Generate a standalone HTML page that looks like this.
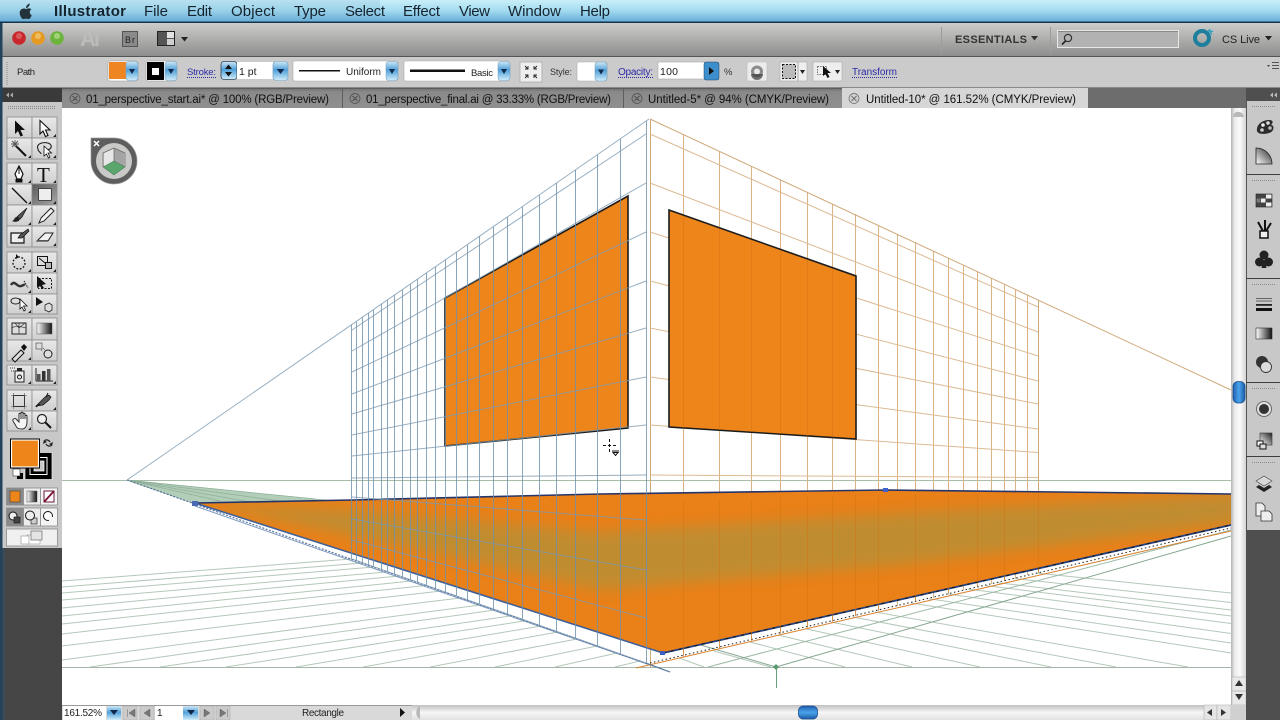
<!DOCTYPE html>
<html><head><meta charset="utf-8"><title>Illustrator</title>
<style>html,body{margin:0;padding:0;background:#fff;overflow:hidden}svg{display:block;font-family:"Liberation Sans",sans-serif;filter:blur(.35px)}</style></head>
<body>
<svg width="1280" height="720" viewBox="0 0 1280 720" xmlns="http://www.w3.org/2000/svg">
<defs>
<linearGradient id="mb" x1="0" y1="0" x2="0" y2="1"><stop offset="0" stop-color="#c9eef8"/><stop offset=".45" stop-color="#a5dcf0"/><stop offset="1" stop-color="#5fa8d6"/></linearGradient>
<linearGradient id="tb" x1="0" y1="0" x2="0" y2="1"><stop offset="0" stop-color="#cdcdcb"/><stop offset="1" stop-color="#8b8b8b"/></linearGradient>
<linearGradient id="tab" x1="0" y1="0" x2="0" y2="1"><stop offset="0" stop-color="#6f6f6f"/><stop offset=".2" stop-color="#8a8a8a"/><stop offset="1" stop-color="#8f8f8f"/></linearGradient>
<linearGradient id="bb" x1="0" y1="0" x2="0" y2="1"><stop offset="0" stop-color="#cfe8f7"/><stop offset=".45" stop-color="#4f9fd8"/><stop offset="1" stop-color="#d2eefb"/></linearGradient>
<linearGradient id="thumb" x1="0" y1="0" x2="1" y2="0"><stop offset="0" stop-color="#1f5fb0"/><stop offset=".5" stop-color="#4aa3ea"/><stop offset="1" stop-color="#1a5aa8"/></linearGradient>
<linearGradient id="thumbh" x1="0" y1="0" x2="0" y2="1"><stop offset="0" stop-color="#1f5fb0"/><stop offset=".5" stop-color="#4aa3ea"/><stop offset="1" stop-color="#1a5aa8"/></linearGradient>
<linearGradient id="sv" x1="0" y1="0" x2="1" y2="0"><stop offset="0" stop-color="#b4b4b4"/><stop offset=".25" stop-color="#ececec"/><stop offset=".6" stop-color="#fafafa"/><stop offset="1" stop-color="#d4d4d4"/></linearGradient>
<linearGradient id="sh" x1="0" y1="0" x2="0" y2="1"><stop offset="0" stop-color="#c0c0c0"/><stop offset=".5" stop-color="#f6f6f6"/><stop offset="1" stop-color="#e0e0e0"/></linearGradient>
<linearGradient id="cell" x1="0" y1="0" x2="0" y2="1"><stop offset="0" stop-color="#e9e9e9"/><stop offset="1" stop-color="#cfcfcf"/></linearGradient>
<linearGradient id="sel" x1="0" y1="0" x2="1" y2="1"><stop offset="0" stop-color="#595959"/><stop offset="1" stop-color="#a8a8a8"/></linearGradient>
<linearGradient id="k2w" x1="0" y1="0" x2="1" y2="0"><stop offset="0" stop-color="#fff"/><stop offset="1" stop-color="#111"/></linearGradient>
<linearGradient id="k2wd" x1="0" y1="1" x2="1" y2="0"><stop offset="0" stop-color="#fff"/><stop offset="1" stop-color="#222"/></linearGradient>
<filter id="b8" x="-10%" y="-30%" width="120%" height="160%"><feGaussianBlur stdDeviation="7"/></filter>
<clipPath id="fc"><path d="M195 503L352 500L600 494L886 490L1231 494V525L663 653Z"/></clipPath>
<g id="dd"><rect x="0" y="0" width="12" height="19" rx="3" fill="url(#bb)" stroke="#7ea6c4" stroke-width=".6"/><path d="M3 7.5h6l-3 5z" fill="#12284a"/></g>
</defs>

<!-- menu bar -->
<rect width="1280" height="23" fill="url(#mb)"/>
<rect x="0" width="380" height="23" fill="#6fa8cc" opacity=".18"/>
<rect x="0" y="21.5" width="1280" height="1.6" fill="#16354c"/>
<path d="M31.5 9.3c-2-1.5-4-.9-5.2-.2-1-.6-3.200-1.200-5.100.3-2.500 2-1.500 6 .3 8.500 1 1.300 2 1.500 3 1 1-.4 2-.4 3 0 1.200.5 2.200 0 3-1.300.5-.8 1-1.600 1.200-2.400-2.400-1-2.600-4.600-.2-5.900zM26 8.200c0-2.200 1.500-4.200 3.700-4.700.1 2.300-1.500 4.300-3.700 4.700z" fill="#24323a"/>
<g font-size="15" fill="#15242e">
<text x="54" y="16" font-weight="bold" textLength="72">Illustrator</text>
<text x="144" y="16" textLength="24">File</text>
<text x="187" y="16" textLength="25">Edit</text>
<text x="231" y="16" textLength="44">Object</text>
<text x="294" y="16" textLength="32">Type</text>
<text x="345" y="16" textLength="40">Select</text>
<text x="403" y="16" textLength="37">Effect</text>
<text x="459" y="16" textLength="31">View</text>
<text x="508" y="16" textLength="53">Window</text>
<text x="580" y="16" textLength="30">Help</text>
</g>

<!-- title bar -->
<rect x="0" y="23" width="1280" height="34" fill="url(#tb)"/>
<rect x="0" y="56" width="1280" height="1" fill="#555"/>
<circle cx="19" cy="38" r="6.800" fill="#c8282c"/><circle cx="19" cy="36" r="3" fill="#e98a88" opacity=".5"/>
<circle cx="38" cy="38" r="6.800" fill="#e59a22"/><circle cx="38" cy="36" r="3" fill="#f6d38a" opacity=".6"/>
<circle cx="57" cy="38" r="6.800" fill="#6cb43c"/><circle cx="57" cy="36" r="3" fill="#c4e6a0" opacity=".6"/>
<text x="80" y="46" font-size="22" font-weight="bold" fill="#bcbcba" textLength="20">Ai</text>
<rect x="122.500" y="31.500" width="15" height="15" fill="#8a8a8a" stroke="#555"/>
<text x="125" y="43" font-size="9" fill="#222" textLength="10">Br</text>
<rect x="157.500" y="31.500" width="17" height="14" fill="#555" stroke="#222"/>
<rect x="167" y="32" width="7" height="6" fill="#e4e4e4"/><rect x="167" y="39" width="7" height="6" fill="#cfcfcf"/>
<path d="M181 37h7l-3.500 4.500z" fill="#222"/>
<rect x="941" y="27" width="1" height="28" fill="#9c9c9c"/><rect x="1050" y="27" width="1" height="28" fill="#9c9c9c"/>
<text x="955" y="43" font-size="11" font-weight="bold" fill="#333" textLength="72">ESSENTIALS</text>
<path d="M1031 36h7l-3.500 4.500z" fill="#333"/>
<rect x="1057.500" y="30.500" width="121" height="17" fill="#b2b2b2" stroke="#e8e8e8"/>
<rect x="1058" y="31" width="120" height="1" fill="#888"/>
<circle cx="1068" cy="38" r="3.600" fill="none" stroke="#333" stroke-width="1.200"/><path d="M1065.500 41l-3.500 3.500" stroke="#222" stroke-width="1.600"/>
<circle cx="1202" cy="38" r="7" fill="none" stroke="#1d7f9c" stroke-width="4"/>
<path d="M1210 32l0-3M1210 32l3-1M1210 32l2 2.500M1210 32l-2-2" stroke="#2aa0c0" stroke-width="1.200"/>
<text x="1222" y="43" font-size="11" fill="#222" textLength="38">CS Live</text>
<path d="M1265 36h7l-3.500 4.500z" fill="#222"/>

<!-- control bar -->
<rect x="0" y="57" width="1280" height="31" fill="#cbcbcb"/>
<path d="M7 62v24" stroke="#888" stroke-width="1" stroke-dasharray="1 1"/>
<text x="17" y="75" font-size="9.500" fill="#222" textLength="18">Path</text>
<rect x="108" y="61" width="30" height="20" rx="2" fill="#fff" stroke="#999" stroke-width=".6"/><rect x="109" y="62" width="17" height="17" fill="#ee8520"/>
<use href="#dd" x="126" y="61.500"/>
<rect x="146" y="61" width="30" height="20" rx="2" fill="#fff" stroke="#999" stroke-width=".6"/><rect x="147" y="62" width="17" height="18" fill="#000"/><rect x="152" y="68" width="7" height="7" fill="#fff"/>
<use href="#dd" x="165" y="61.500"/>
<text x="187" y="75" font-size="9.500" fill="#2c2ca8" textLength="29">Stroke:</text>
<path d="M187 77.500h29" stroke="#2c2ca8" stroke-dasharray="1 1"/>
<rect x="221" y="61.500" width="16" height="18" rx="3" fill="url(#bb)" stroke="#345" stroke-width=".8"/>
<path d="M225 69h7l-3.500-4.500zM225 72h7l-3.500 4.500z" fill="#111"/>
<rect x="237" y="62" width="36" height="17" fill="#fff"/><text x="239" y="75" font-size="10.500" fill="#222">1 pt</text>
<use href="#dd" transform="translate(273 61.500) scale(1.250 1)"/>
<rect x="293" y="61" width="105" height="20" rx="2" fill="#fff" stroke="#aaa" stroke-width=".6"/>
<rect x="299" y="70" width="41" height="1.500" fill="#111"/>
<text x="346" y="75" font-size="10" fill="#222" textLength="35">Uniform</text>
<use href="#dd" x="386" y="61.500"/>
<rect x="404" y="61" width="105" height="20" rx="2" fill="#fff" stroke="#aaa" stroke-width=".6"/>
<rect x="410" y="69.500" width="55" height="2.500" fill="#111"/>
<text x="471" y="76" font-size="9.500" fill="#222" textLength="22">Basic</text>
<use href="#dd" x="498" y="61.500"/>
<rect x="520" y="62" width="22" height="20" fill="#eee" stroke="#aaa" stroke-width=".8"/>
<path d="M525 66l3 3m-3 0h3v-3M537 66l-3 3m3 0h-3v-3M525 78l3-3m-3 0h3v3M537 78l-3-3m3 0h-3v3" stroke="#222" fill="none" stroke-width=".9"/>
<text x="550" y="75" font-size="9" fill="#333" textLength="22">Style:</text>
<rect x="577" y="62" width="30" height="19" rx="2" fill="#fff" stroke="#aaa" stroke-width=".6"/><use href="#dd" x="595" y="62"/>
<text x="618" y="75" font-size="10" fill="#2c2ca8" textLength="35">Opacity:</text>
<path d="M618 77.500h35" stroke="#2c2ca8" stroke-dasharray="1 1"/>
<rect x="658" y="62" width="47" height="17" fill="#fff" stroke="#aaa" stroke-width=".6"/>
<text x="660" y="75" font-size="10.500" fill="#222" textLength="18">100</text>
<rect x="704" y="62" width="15" height="18" rx="2" fill="#3c8fcc" stroke="#246" stroke-width=".5"/><path d="M709 67v8l5-4z" fill="#111"/>
<text x="724" y="75" font-size="9.500" fill="#333">%</text>
<rect x="747" y="62" width="20" height="19" rx="2" fill="#ececec" stroke="#bbb" stroke-width=".6"/>
<circle cx="757" cy="71.500" r="6" fill="#8a8a8a"/><circle cx="757" cy="71.500" r="3" fill="#e8e8e8"/><path d="M751 74a6 6 0 0 0 12 0z" fill="#3c3c3c" opacity=".7"/>
<rect x="780" y="62" width="27" height="19" fill="#eee" stroke="#aaa" stroke-width=".6"/><rect x="782.500" y="64.500" width="13" height="14" fill="#bbb" stroke="#111" stroke-dasharray="2 1.500"/><path d="M800 70h5l-2.500 4z" fill="#222"/><rect x="797.500" y="62" width="1" height="19" fill="#aaa"/>
<rect x="813" y="62" width="29" height="19" fill="#eee" stroke="#aaa" stroke-width=".6"/><rect x="817.500" y="66.500" width="9" height="8" fill="none" stroke="#777" stroke-dasharray="1.500 1"/><path d="M823 66l0 10 2.500-2 2 4 2-1-2-4h3.500z" fill="#111"/><path d="M835 70h5l-2.500 4z" fill="#222"/>
<text x="852" y="75" font-size="10" fill="#2c2ca8" textLength="45">Transform</text>
<path d="M852 77.500h45" stroke="#2c2ca8" stroke-dasharray="1 1"/>
<path d="M1272 62.500h7M1272 65.500h7M1272 68.500h7" stroke="#555"/><path d="M1267 65h3l-1.500 2z" fill="#444"/>

<!-- tabs -->
<rect x="62" y="88" width="1185" height="20" fill="url(#tab)"/>
<rect x="0" y="87.500" width="1280" height="1" fill="#444"/>
<rect x="1088" y="88" width="159" height="20" fill="#6d6d6d"/>
<rect x="842" y="88" width="246" height="20" fill="#d6d6d6"/>
<rect x="342" y="89" width="1" height="19" fill="#5e5e5e"/><rect x="623" y="89" width="1" height="19" fill="#5e5e5e"/>
<g fill="#8a8a8a" stroke="#4a4a4a" stroke-width=".7"><circle cx="75" cy="98.500" r="5"/><circle cx="355" cy="98.500" r="5"/><circle cx="637" cy="98.500" r="5"/></g>
<circle cx="854" cy="98.500" r="5" fill="#cfcfcf" stroke="#666" stroke-width=".7"/>
<path d="M72.500 96l5 5m0-5l-5 5M352.500 96l5 5m0-5l-5 5M634.500 96l5 5m0-5l-5 5" stroke="#3c3c3c" stroke-width=".8"/><path d="M851.500 96l5 5m0-5l-5 5" stroke="#555" stroke-width=".8"/>
<g font-size="11.500" fill="#111">
<text x="86" y="103" textLength="243">01_perspective_start.ai* @ 100% (RGB/Preview)</text>
<text x="366" y="103" textLength="245">01_perspective_final.ai @ 33.33% (RGB/Preview)</text>
<text x="648" y="103" textLength="181">Untitled-5* @ 94% (CMYK/Preview)</text>
<text x="866" y="103" textLength="210">Untitled-10* @ 161.52% (CMYK/Preview)</text>
</g>

<!-- canvas -->
<rect x="62" y="108" width="1169" height="597" fill="#fff"/>
<g fill="none" stroke-width="1">
<path stroke="#b4c8ba" d="M62 581L351 559M62 587L363 563M62 593L374 567M62 600L386 572M62 608L399 576M62 616L412 581M62 624L425 585.500M62 634L441 591M62 646L460 598M62 660L480 605M90 667L495 610M160 667L510 616M226 667L524 621M296 667L541 626M363 667L558 632M430 667L577 639M495 667L597 646M555 667L617 653M615 667L640 661"/>
<path stroke="#b4c8ba" d="M1036 573L1231 593M1014 578.500L1231 602.500M997 582.600L1231 610M985 585.500L1231 616M968 589L1231 623.500M948 594L1231 633.500M929 598.700L1231 643M911 603L1231 653M875 612L1188 667M853 617L1116 667M831 622L1051 667M805 628.600L980 667M778 635L912 667M750 642L845 667M714 651L771 667M679 658L704 667"/>
<path stroke="#9cbaa6" d="M708 667L1231 530"/>
<path stroke="#86a690" d="M776 667L1231 536M776 667L680 639"/>
<path stroke="#a4bca8" d="M62 480.500H1231"/>
<path stroke="#a4b4a8" d="M62 667.500H1231"/>
<path stroke="#6aa07c" d="M776.500 667V688"/>
<path stroke="#dcb484" d="M683.500 134V658M719.500 151V649M751.500 166V641M780.500 180V634M807.500 192V628M832.500 204V622M855.500 214V616M878.500 225V611M897.500 234V606M915.500 242V602M933.500 251V598M948.500 258V594M963.500 265V590M977.500 271V587M991.500 278V584M1004.500 284V581M1015.500 289V578M1027.500 295V575"/>
<path stroke="#cfa878" d="M650.500 119V668M1038.500 300V573M650 119L1231 390"/>
<path stroke="#dcba94" d="M650 134L1038 307M650 183L1038 332M650 232L1038 356M650 281L1038 381M650 328L1038 404M650 377L1038 429M650 425L1038 452.500M650 475L1038 477.500"/>
</g>
<!-- wedge -->
<path d="M127 480L330 500L195 503Z" fill="#b2cdb8"/>
<path d="M127 480L196 504M127 480L220 501M127 480L250 502M127 480L280 501M127 480L315 499" stroke="#8fb09a" stroke-width=".7" fill="none"/>
<!-- floor -->
<path d="M195 503L352 500L600 494L886 490L1231 494V525L663 653Z" fill="#ea8018"/>
<g clip-path="url(#fc)"><path d="M1240 493V522L900 565L600 590L350 535L200 504L350 510L600 532L900 513Z" fill="#8f9c50" opacity=".45" filter="url(#b8)"/></g>
<path d="M195 503L352 500L600 494L886 490L1231 494" fill="none" stroke="#25356a" stroke-width="1.600"/>
<path d="M195 503L663 653" stroke="#3f5f98" stroke-width="1.600" fill="none"/>
<path d="M663 653L1231 525" stroke="#24407e" stroke-width="1.800" fill="none"/>
<path d="M663 653L1231 525" stroke="#111" stroke-width="1" stroke-dasharray="3 5" fill="none"/>
<path d="M195 506L670 672" stroke="#7a96bc" stroke-width="1" fill="none"/>
<path d="M127 480L648 664" stroke="#4c6c9c" stroke-width="1.100" stroke-dasharray="2 1.500" fill="none"/>
<path d="M636 668L1231 531" stroke="#d8832e" stroke-width="1" fill="none"/>
<path d="M650 663L1231 528" stroke="#222" stroke-width="1" stroke-dasharray="1.500 2.500" fill="none"/>
<rect x="883" y="488" width="5" height="4" fill="#4060d0"/><rect x="192" y="501" width="6" height="5" fill="#4a6ab4"/><rect x="660" y="651" width="5" height="4" fill="#4060c0"/>
<path d="M776 664l3 3-3 3-3-3z" fill="#5a9a70"/>
<!-- rectangles -->
<path d="M445 298L628 196V428L445 446Z" fill="#ee851a" stroke="#1c1c1c" stroke-width="1.600"/>
<path d="M669 210L856 276V439L669 427Z" fill="#ee851a" stroke="#1c1c1c" stroke-width="1.600"/>
<path d="M683.500 216V428M719.500 229V430M751.500 240V432M780.500 250V434M807.500 260V436M832.500 269V437M683.500 500V655M719.500 500V648M751.500 500V640M780.500 498V633M807.500 497V627M832.500 496V621M855.500 495V616M878.500 494V610M915.500 494V601M948.500 494V593M977.500 494V586M1004.500 494V580M1038.500 494V572" stroke="#cf7414" opacity=".5" fill="none"/>
<!-- blue grid -->
<g fill="none" stroke-width="1">
<path stroke="#6d90ad" opacity=".8" d="M351.500 325V559M356.500 322V561M362.500 317V563M368.500 313V565M373.500 310V567M381.500 304V570M387.500 300V572M394.500 295V574M402.500 290V577M410.500 284V580M417.500 279V583M426.500 273V586M435.500 267V589M445.500 260V592M456.500 252V596M467.500 245V600M479.500 236V604M493.500 227V609M507.500 217V614M522.500 207V620M539.500 195V626M556.500 183V632M575.500 170V638M597.500 155V646M620.500 139V654M646.500 121V663"/>
<path stroke="#7d9ab0" opacity=".8" d="M127 480L649 119M352 330L646 134M352 351L646 183M352 372L646 232M352 394L646 281M352 414L646 328M352 435L646 377M352 456L646 425M352 478L646 475M352 497L646 520M352 519L646 570M352 540L646 618M352 559L646 663"/>
<path stroke="#5a7a9c" d="M646 663L670 672"/>
</g>
<!-- widget -->
<path d="M91 138h23a23 23 0 1 1-23 23z" fill="#5e5e5e" stroke="#9a9a9a" stroke-width=".7"/>
<circle cx="114" cy="161" r="18" fill="#c9c9c7"/>
<path d="M114 148l-10 5v14l10 7z" fill="#e6e6e6"/><path d="M114 148l10 5v14l-10-0z" fill="#a4a4a4"/>
<path d="M103 167l11-6 11 6-11 8z" fill="#5aa66c" stroke="#3d6a4c" stroke-width=".5"/>
<path d="M114 148l-11 5v14M114 148l11 5v14M114 149v12" fill="none" stroke="#666" stroke-width=".7"/>
<path d="M94 141l5 5m0-5l-5 5" stroke="#fff" stroke-width="1.500"/>
<!-- cursor -->
<path d="M609.500 439v3M609.500 444v3M609.500 449v3M603 445.500h3M608 445.500h3M613 445.500h3M612 451h7M613 452.500h5l-2.500 3z" stroke="#111" fill="none"/>

<!-- left toolbar -->
<rect x="0" y="88" width="62" height="632" fill="#464646"/>
<rect x="2" y="102" width="60" height="446" fill="#c8c8c8"/>
<rect x="2" y="88" width="60" height="14" fill="#3a3a3a"/>
<rect x="0" y="23" width="2.500" height="697" fill="#24425c"/>
<rect x="2.500" y="548" width="3" height="172" fill="#3c4a54"/>
<path d="M6 92.500l3 2.500-3 2.500zM10 92.500l3 2.500-3 2.500z" fill="#aaa" transform="matrix(-1 0 0 1 19 0)"/>
<path d="M8 106.500h48M8 108.500h48" stroke="#8a8a8a" stroke-dasharray="1 1"/>
<g fill="url(#cell)" stroke="#8a8a8a" stroke-width=".8">
<rect x="7" y="117" width="25" height="21"/><rect x="32" y="117" width="25" height="21"/><rect x="7" y="138" width="25" height="21"/><rect x="32" y="138" width="25" height="21"/>
<rect x="7" y="163" width="25" height="21"/><rect x="32" y="163" width="25" height="21"/><rect x="7" y="184" width="25" height="21"/><rect x="32" y="184" width="25" height="21" fill="url(#sel)"/><rect x="7" y="205" width="25" height="21"/><rect x="32" y="205" width="25" height="21"/><rect x="7" y="226" width="25" height="21"/><rect x="32" y="226" width="25" height="21"/>
<rect x="7" y="252" width="25" height="21"/><rect x="32" y="252" width="25" height="21"/><rect x="7" y="273" width="25" height="21"/><rect x="32" y="273" width="25" height="21"/><rect x="7" y="294" width="25" height="20"/><rect x="32" y="294" width="25" height="20"/>
<rect x="7" y="318" width="25" height="22"/><rect x="32" y="318" width="25" height="22"/><rect x="7" y="340" width="25" height="21"/><rect x="32" y="340" width="25" height="21"/>
<rect x="7" y="365" width="25" height="20"/><rect x="32" y="365" width="25" height="20"/>
<rect x="7" y="390" width="25" height="21"/><rect x="32" y="390" width="25" height="21"/><rect x="7" y="411" width="25" height="20"/><rect x="32" y="411" width="25" height="20"/>
</g>
<g fill="#222">
<path d="M56 137v-3l-3 3zM31 158v-3l-3 3zM56 158v-3l-3 3zM31 183v-3l-3 3zM56 183v-3l-3 3zM31 204v-3l-3 3zM56 204v-3l-3 3zM31 225v-3l-3 3zM56 225v-3l-3 3zM56 246v-3l-3 3zM31 272v-3l-3 3zM56 272v-3l-3 3zM31 293v-3l-3 3zM31 313v-3l-3 3zM31 360v-3l-3 3zM31 384v-3l-3 3zM56 384v-3l-3 3zM56 410v-3l-3 3zM31 430v-3l-3 3z"/>
</g>
<path d="M15 120.500V134l3-3 2.500 5.500 2.500-1-2.500-5.500h4.500z" fill="#111"/>
<path d="M40 120.500V134l3-3 2.500 5.500 2.500-1-2.500-5.500h4.500z" fill="#fff" stroke="#111" stroke-width="1.100"/>
<path d="M16 146l10 10" stroke="#111" stroke-width="2"/><path d="M15 140v7M11 144h8M12 141l6 6M18 141l-6 6" stroke="#555" stroke-width=".9"/>
<path d="M38 149c-3-6 8-8 12-5 3 3 0 6-4 6M38 149c0 3 3 3 3 5" fill="none" stroke="#222" stroke-width="1.100"/><path d="M44 146v10l2.500-2 2 4 1.500-1-2-4h3.500z" fill="#fff" stroke="#111" stroke-width=".8"/>
<path d="M19 166l-4 8 2 5h4l2-5z" fill="#fff" stroke="#111" stroke-width="1.200"/><path d="M19 166v8" stroke="#111"/><rect x="15.500" y="179" width="7" height="3.500" fill="#111"/>
<text x="37" y="182" font-family="Liberation Serif,serif" font-size="21" fill="#111">T</text>
<path d="M12 188l15 15" stroke="#111" stroke-width="1.300"/>
<rect x="38.500" y="188.500" width="13" height="12" rx="1" fill="#eee" stroke="#222" stroke-width=".8"/>
<path d="M27 208l-8 7-2 2 3 2 2-2z" fill="#555" stroke="#111" stroke-width=".7"/><path d="M17 217c-3 0-2 3-5 4 3 1.500 7 1 8-2z" fill="#222"/>
<path d="M51 208l-10 10-2 5 5-2 10-10z" fill="#f4f4f4" stroke="#222" stroke-width="1"/>
<path d="M11 233h13v10H11z" fill="#eee" stroke="#111" stroke-width="1.200"/><path d="M28 229l-8 6-2 3 4 0 7-7z" fill="#555" stroke="#111" stroke-width=".7"/>
<path d="M37 241l8-8h8l-5 8z" fill="#f2f2f2" stroke="#222"/><path d="M37 241h11v-1H37z" fill="#555"/>
<circle cx="19" cy="263" r="6" fill="none" stroke="#111" stroke-width="1.300" stroke-dasharray="1.800 1.600"/><path d="M16 254l3 3-3 2zM14 257h3" fill="#111"/>
<rect x="37.500" y="256.500" width="10" height="9" fill="#ddd" stroke="#111"/><rect x="45.500" y="262.500" width="6" height="6" fill="#bbb" stroke="#111"/><path d="M39 258l6 5" stroke="#111"/>
<path d="M11 285c3-5 5 0 8 1 3 1 4-2 6-1" fill="none" stroke="#333" stroke-width="2.500"/><path d="M24 281l4 7" stroke="#111" stroke-dasharray="1.500 1"/>
<rect x="38.500" y="278.500" width="13" height="10" fill="none" stroke="#111" stroke-dasharray="2 1.500"/><path d="M37 276v12l3-2 2 3 2-1-2-3 4-1z" fill="#111"/>
<path d="M11 301c0-4 9-4 9 0s-9 4-9 0z" fill="#ddd" stroke="#222"/><path d="M20 299v10l2-2 2 4 1.500-1-2-4h3.500z" fill="#fff" stroke="#111" stroke-width=".8"/>
<path d="M36 297v9l7-4z" fill="#111"/><path d="M45 305l4-2 3 2v5l-3 2-4-2z" fill="#ddd" stroke="#222" stroke-width=".8"/>
<rect x="12" y="323" width="14" height="11" fill="#ddd" stroke="#222"/><path d="M12 328c4-3 10-1 14 0M19 323v11M15 323l4 5 6-5" fill="none" stroke="#333" stroke-width=".7"/>
<rect x="37" y="323" width="15" height="11" fill="url(#k2w)" stroke="#555" stroke-width=".5"/>
<path d="M12 359l9-9 3 3-9 9z" fill="#ddd" stroke="#111"/><path d="M21 347l3-3 3 3-3 4z" fill="#111"/>
<rect x="36" y="343" width="6" height="6" fill="#ddd" stroke="#555" stroke-width=".7"/><circle cx="48" cy="354" r="4" fill="#ddd" stroke="#222"/><path d="M41 350l2 1M43 348l3 3" stroke="#555" stroke-dasharray="1 1"/>
<rect x="15" y="371" width="9" height="11" fill="#eee" stroke="#222"/><circle cx="19.500" cy="377" r="2" fill="none" stroke="#111"/><rect x="17" y="368" width="5" height="3" fill="#222"/><path d="M10 368h5M11 371h4" stroke="#444" stroke-dasharray="1 1"/>
<path d="M36 381h17M36 368v13" stroke="#222" fill="none"/><rect x="37" y="374" width="3.500" height="7" fill="#555"/><rect x="42" y="371" width="3.500" height="10" fill="#333"/><rect x="47" y="369" width="3.500" height="12" fill="#555"/>
<rect x="13.500" y="395.500" width="11" height="11" fill="none" stroke="#111"/><path d="M11 395.500h16M11 406.500h16M13.500 393v16M24.500 393v16" stroke="#555" stroke-width=".6"/>
<path d="M36 406l9-9 4-2 2 2-2 3-6 5z" fill="#555" stroke="#111" stroke-width=".7"/><path d="M48 393l-2 4M40 404l-4 3" stroke="#111"/>
<path d="M13 421l3 5c1 3 4 3 7 3 3-1 4-4 4-7v-6c0-1-2-1-2 0v3-5c0-1-2-1-2 0v5-6c0-1-2-1-2 0v6-5c0-1-2-1-2 0v8l-3-3c-1-1-4 0-3 2z" fill="#f4f4f4" stroke="#222" stroke-width=".9"/>
<circle cx="42" cy="419" r="4.500" fill="#eee" stroke="#222" stroke-width="1.200"/><path d="M45.500 422.500l5.500 5.500" stroke="#111" stroke-width="2"/>
<rect x="25" y="452.500" width="27" height="27" fill="#000" stroke="#eee" stroke-width=".7"/>
<rect x="30" y="457.500" width="17" height="17" fill="none" stroke="#fff"/><rect x="34" y="461" width="10" height="10" fill="#c8c8c8" stroke="#fff" stroke-width=".7"/>
<rect x="11.500" y="440" width="27" height="27" fill="#ee851a" stroke="#fff" stroke-width="1.200"/>
<rect x="10.500" y="439" width="29" height="29" fill="none" stroke="#000"/>
<path d="M44 441c2-2 5-1 6 1M52 445c-2 2-5 1-6-1" fill="none" stroke="#222" stroke-width="1.200"/><path d="M43 444l1-4 3 2zM53 442l-1 4-3-2z" fill="#222"/>
<rect x="17" y="473" width="6" height="6" fill="#000"/><rect x="13" y="469" width="7" height="7" fill="#fff" stroke="#333" stroke-width=".6"/>
<g stroke="#8a8a8a" stroke-width=".8" fill="#ececec">
<rect x="6.500" y="488" width="17" height="17" fill="#8a8a8a"/><rect x="23.500" y="488" width="17" height="17"/><rect x="40.500" y="488" width="17" height="17" fill="#f4f4f4"/>
<rect x="6.500" y="508" width="17" height="18" fill="#8a8a8a"/><rect x="23.500" y="508" width="17" height="18"/><rect x="40.500" y="508" width="17" height="18" fill="#f4f4f4"/>
<rect x="6.500" y="529" width="51" height="17" fill="#f0f0f0"/>
</g>
<rect x="10" y="491" width="10" height="11" fill="#ee851a" stroke="#333" stroke-width=".5"/>
<rect x="27" y="491" width="10" height="11" fill="url(#k2w)" stroke="#555" stroke-width=".5"/>
<rect x="44" y="491" width="10" height="11" fill="#fff" stroke="#6a1a3c"/><path d="M44 502l10-11" stroke="#7a1436" stroke-width="1.800"/>
<circle cx="13" cy="516" r="4" fill="#eee" stroke="#111"/><rect x="14" y="517" width="6" height="6" fill="#444" stroke="#111" stroke-width=".6"/>
<rect x="31" y="518" width="6" height="6" fill="#ccc" stroke="#111" stroke-width=".6"/><circle cx="30" cy="515.500" r="4.500" fill="#eee" stroke="#111"/>
<circle cx="48" cy="516" r="4.500" fill="#fff" stroke="#111"/><path d="M49 517h5v5h-5z" fill="#f4f4f4"/>
<rect x="27" y="535" width="13" height="9" fill="#fff" stroke="#999" stroke-width=".6"/><rect x="31" y="531" width="11" height="9" fill="#e4e4e4" stroke="#555" stroke-width=".6"/>
<rect x="21" y="536" width="8" height="8" fill="#fff" stroke="#777" stroke-width=".5"/>

<!-- right scrollbar -->
<rect x="1231" y="108" width="15" height="597" fill="url(#sv)"/>
<path d="M1233 117c0-7 10-7 11 0z" fill="#b8b8b8"/>
<rect x="1233" y="381.500" width="12" height="21.500" rx="5" fill="url(#thumb)" stroke="#174d8c" stroke-width=".8"/>
<rect x="1232" y="677" width="14" height="28" fill="#e8e8e8" stroke="#aaa" stroke-width=".5"/>
<path d="M1232 691h14" stroke="#bbb"/>
<path d="M1235 686h8l-4-6zM1235 694h8l-4 6z" fill="#333"/>

<!-- right dock -->
<rect x="1246" y="88" width="34" height="632" fill="#4f4f4f"/>
<rect x="1246" y="101" width="34" height="429" fill="#c8c8c8"/>
<rect x="1246" y="100" width="1" height="430" fill="#555"/>
<path d="M1246 174.500h34M1246 278.500h34M1246 382.500h34M1246 456.500h34" stroke="#3f3f3f"/>
<path d="M1252 106.500h24M1252 180.500h24M1252 284.500h24M1252 388.500h24M1252 462.500h24" stroke="#8a8a8a" stroke-dasharray="1 1"/>
<path d="M1277 92.500l-3 2.500 3 2.500zM1273 92.500l-3 2.500 3 2.500z" fill="#bbb"/>
<path d="M1257 131c-1-6 5-11 12-11 5 0 4 3 2 5 4 0 3 7-2 8-3 1-11 2-12-2z" fill="#2c2c2c"/><circle cx="1263" cy="125" r="1.800" fill="#eee"/><circle cx="1268" cy="123" r="1.800" fill="#ddd"/><circle cx="1270" cy="128" r="1.800" fill="#bbb"/><circle cx="1262" cy="130" r="1.800" fill="#ccc"/>
<path d="M1256 148v16h16c0-9-7-16-16-16z" fill="url(#k2wd)" stroke="#222" stroke-width=".8"/>
<rect x="1256" y="194" width="16" height="13" fill="#444" stroke="#222" stroke-width=".6"/>
<path d="M1266 194.500h5.500v4h-5.500zM1261 198.500h4.500v4h-4.500zM1266 202.500h5.500v4h-5.500z" fill="#eee"/><path d="M1256.500 198.500h4v4h-4z" fill="#777"/>
<rect x="1260" y="231" width="8" height="7" fill="#eee" stroke="#111" stroke-width="1.500"/><path d="M1263 231l-5-9M1265 231l0-11M1266 231l5-8" stroke="#111" stroke-width="2"/>
<circle cx="1264" cy="255" r="4.500" fill="#222"/><circle cx="1259.500" cy="262" r="4.500" fill="#222"/><circle cx="1268.500" cy="262" r="4.500" fill="#222"/><path d="M1263 260h2l1.500 8h-5z" fill="#222"/>
<path d="M1256 298.500h16M1256 301h16" stroke="#444" stroke-width=".8"/><rect x="1256" y="304" width="16" height="1.800" fill="#222"/><rect x="1256" y="308" width="16" height="3" fill="#111"/>
<rect x="1256" y="328" width="16" height="11" fill="url(#k2w)" stroke="#333" stroke-width=".6"/>
<circle cx="1262" cy="362" r="6" fill="#333"/><circle cx="1266" cy="367" r="5.500" fill="#ddd" stroke="#333" stroke-width=".9"/>
<circle cx="1264" cy="409" r="7.500" fill="#ddd" stroke="#555" stroke-width=".8"/><circle cx="1264" cy="409" r="5" fill="#333"/>
<rect x="1260" y="433" width="12" height="12" fill="url(#k2wd)" stroke="#333" stroke-width=".6"/><rect x="1257" y="441" width="6" height="5" fill="#fff" stroke="#111"/><rect x="1260" y="444" width="6" height="5" fill="#ddd" stroke="#111"/>
<path d="M1256 481l8-5 8 5-8 5z" fill="#d8d8d8" stroke="#444" stroke-width=".6"/><path d="M1256 487l3-2 5 3 5-3 3 2-8 5z" fill="#222"/>
<path d="M1256 503h6l3 3v10h-9z" fill="#eee" stroke="#333" stroke-width=".8"/><path d="M1261 511h8l3 3v7h-11z" fill="#eee" stroke="#333" stroke-width=".8"/>

<!-- bottom status -->
<rect x="62" y="705" width="1184" height="15" fill="#d9d9d9"/>
<rect x="62" y="705" width="1184" height="1" fill="#999"/>
<rect x="63" y="706" width="43" height="14" fill="#fff"/>
<text x="64" y="716" font-size="10" fill="#222" textLength="38">161.52%</text>
<rect x="107" y="706" width="14" height="14" fill="url(#bb)"/><path d="M110 710h8l-4 5z" fill="#12284a"/>
<g fill="#cbcbcb" stroke="#aaa" stroke-width=".5"><rect x="123" y="706" width="14" height="14"/><rect x="140" y="706" width="14" height="14"/><rect x="200" y="706" width="14" height="14"/><rect x="216" y="706" width="14" height="14"/></g>
<path d="M127.500 709v8M135 709l-6 4 6 4zM150 709l-6 4 6 4zM204 709l6 4-6 4zM220 709l6 4-6 4zM227.500 709v8" fill="#777" stroke="#666" stroke-width=".5"/>
<rect x="155" y="706" width="28" height="14" fill="#fff"/>
<text x="157" y="716" font-size="10" fill="#222">1</text>
<rect x="183" y="706" width="15" height="14" fill="url(#bb)"/><path d="M187 710h8l-4 5z" fill="#12284a"/>
<text x="302" y="716" font-size="10" fill="#222" textLength="42">Rectangle</text>
<path d="M400 708v9l5-4.500z" fill="#111"/>
<rect x="412" y="705" width="820" height="15" fill="url(#sh)"/>
<path d="M420 706c-5 2-5 11 0 13z" fill="#b8b8b8"/>
<rect x="798.500" y="706" width="19" height="13" rx="5" fill="url(#thumbh)" stroke="#174d8c" stroke-width=".8"/>
<rect x="1204" y="705" width="13" height="15" fill="#e4e4e4" stroke="#aaa" stroke-width=".5"/><rect x="1217" y="705" width="14" height="15" fill="#e4e4e4" stroke="#aaa" stroke-width=".5"/>
<path d="M1212 709v7l-5-3.500zM1221 709v7l5-3.500z" fill="#333"/>
<rect x="1231" y="705" width="15" height="15" fill="#d0d0d0"/>
</svg>
</body></html>
